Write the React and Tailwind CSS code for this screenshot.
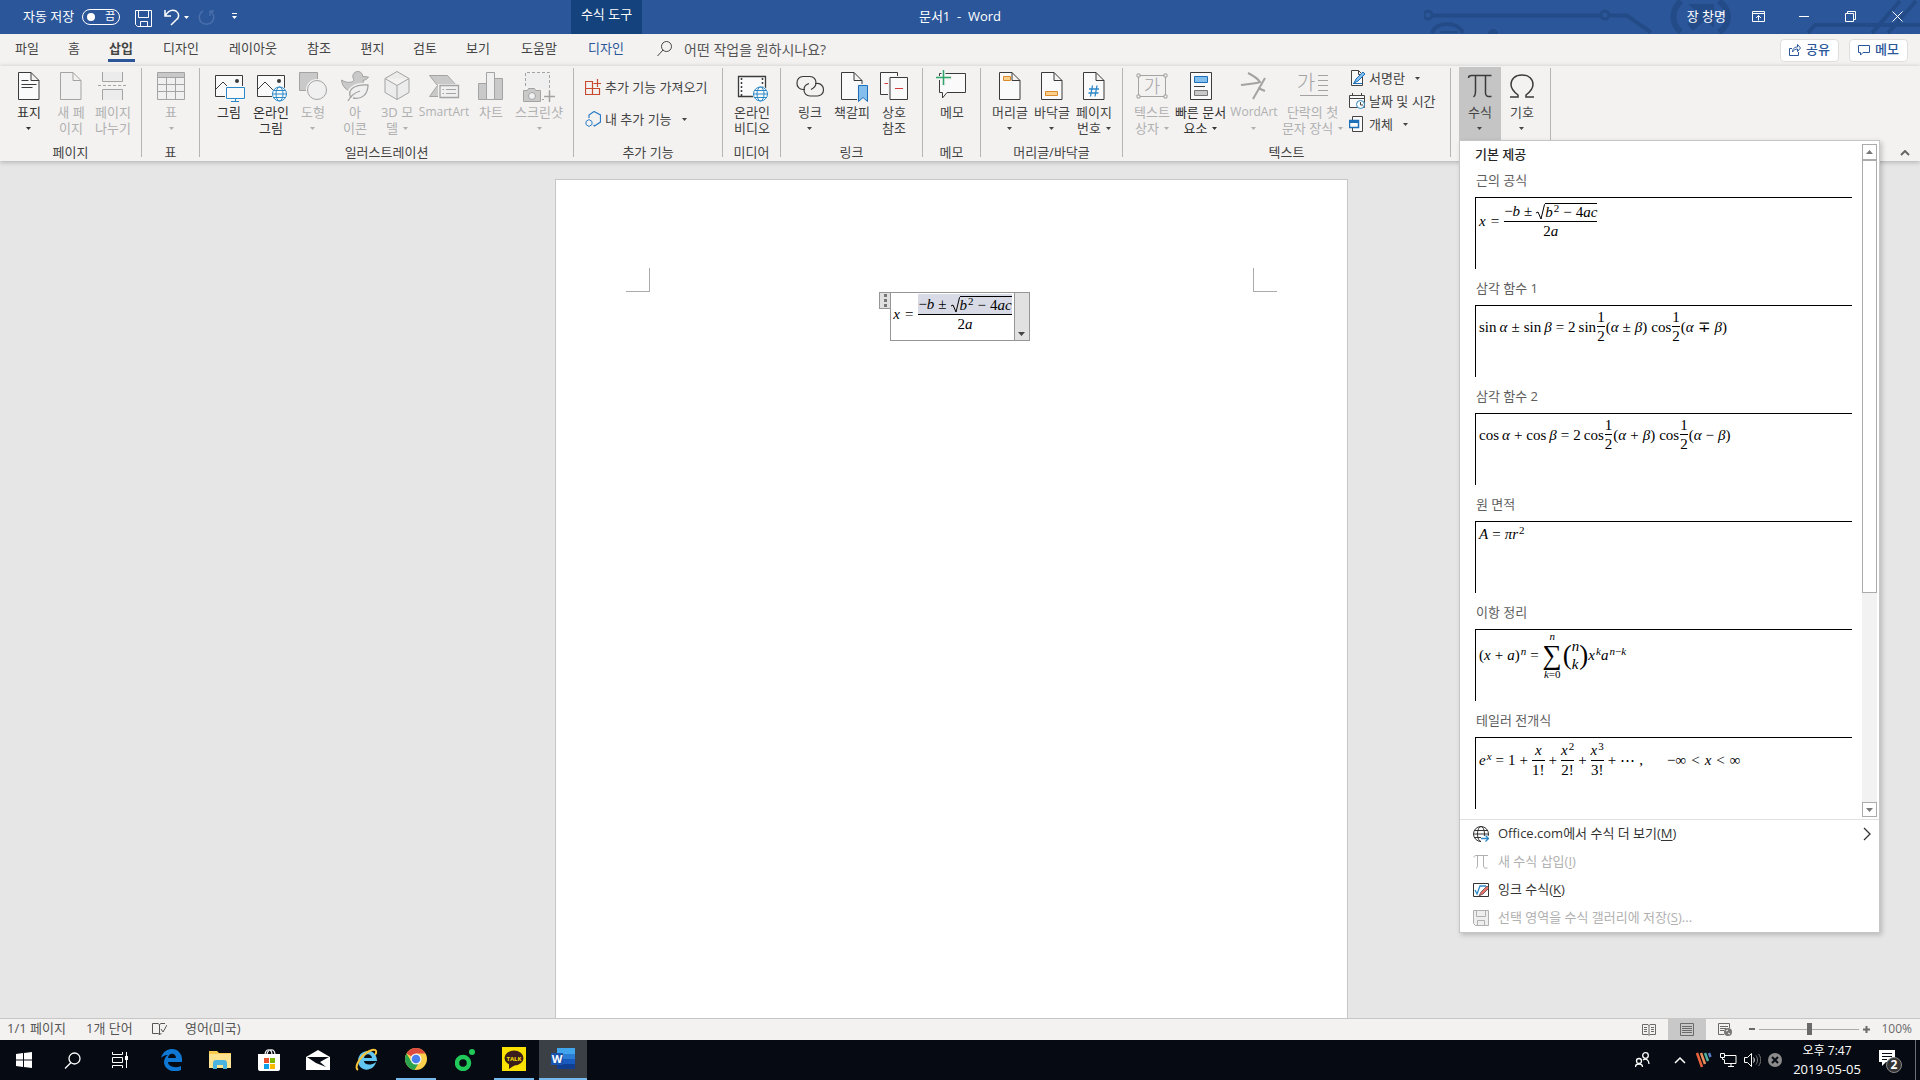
import React, { useState } from 'react';
import clsx from 'clsx';

const Svg = ({ w = 32, h, className, children, ...rest }) => (
    <svg
        width={w}
        height={h || w}
        viewBox={`0 0 ${w} ${h || w}`}
        fill="none"
        stroke="currentColor"
        aria-hidden="true"
        className={clsx('shrink-0', className)}
        {...rest}
    >
        {children}
    </svg>
);

const Caret = ({ className }) => (
    <Svg w={5} h={3} className={clsx('inline-block', className)} stroke="none">
        <path d="M0 0h5L2.500 3z" fill="currentColor" />
    </Svg>
);

const Arrow = ({ className }) => (
    <Svg w={7} h={4} className={className} stroke="none">
        <path d="M0 0h7L3.500 4z" fill="currentColor" />
    </Svg>
);

const Globe = ({ cx, cy, r, color = '#2b88c8', bg = '#fafafa' }) => (
    <g stroke={color} fill="none">
        <circle cx={cx} cy={cy} r={r + 1} fill={bg} stroke="none" />
        <circle cx={cx} cy={cy} r={r} />
        <ellipse cx={cx} cy={cy} rx={r / 2} ry={r} />
        <path d={`M${cx - r} ${cy}h${r * 2}M${cx - r + 1} ${cy - r / 2}h${r * 2 - 2}M${cx - r + 1} ${cy + r / 2}h${r * 2 - 2}`} />
    </g>
);

/* ---------- ribbon icons, 32x32 ---------- */

const Sheet = ({ fill = '#fafafa' }) => (
    <path d="M5.5 2.5h12.5l8 8v19H5.5zM18 2.5v8h8" fill={fill} />
);

const icons = {
    cover: <><Sheet /><path d="M8.500 10.500h7M8.500 14.500h15M8.500 17.500h11" /></>,
    newPage: <Sheet fill="#f0f0f0" />,
    pageBreak: <><path d="M5.500 2v9.500h20V2M5.500 30v-10.500h20V30" fill="#ececec" /><path d="M1 15.500h29" strokeDasharray="3 2" /></>,
    table: <><path d="M2.500 2.500h27v27h-27z" fill="#f0f0f0" /><path d="M3 3h26v4H3z" fill="#c8c8c8" stroke="none" /><path d="M2.500 7.500h27M2.500 14.500h27M2.500 21.500h27M11.500 7v22M20.500 7v22" /></>,
    picture: <>
        <path d="M2.500 5.500h27v21h-27z" fill="#fafafa" /><path d="M3 19l7-7 9 9" /><circle cx="24" cy="11" r="2" fill="currentColor" stroke="none" />
        <path d="M12 16h20v14H12z" fill="#fafafa" stroke="none" /><path d="M13.500 17.500h18v11h-18zM22.500 28.500v3M18 31.500h8" stroke="#2b88c8" fill="#fafafa" />
    </>,
    onlinePicture: <>
        <path d="M2.500 5.500h27v21h-27z" fill="#fafafa" /><path d="M3 19l7-7 9 9" /><circle cx="24" cy="11" r="2" fill="currentColor" stroke="none" />
        <Globe cx={24.5} cy={24} r={7} />
    </>,
    shapes: <><path d="M2.500 2.500h18v18h-18z" fill="#c9c9c9" /><circle cx="20" cy="20" r="11" fill="#f3f2f1" stroke="none" /><circle cx="20" cy="20" r="9.500" fill="#f0f0f0" /></>,
    iconSet: <>
        <path d="M14.500 9a5 5 0 1 1 9.300-2.500L29.500 7c-1 2-3 3-5.500 3.500 2 6-2 11-9 11S3 17 2.500 10c3 2 7 3 10 2 2-.500 2.500-2 2-3z" fill="#c9c9c9" />
        <path d="M12 28c-5-9 5-14 17-13 0 9-6 15-15 13" fill="#f0f0f0" stroke="#f3f2f1" strokeWidth="4" />
        <path d="M12 28c-5-9 5-14 17-13 0 9-6 15-15 13M9 31c2-4 6-8 12-10" fill="#f0f0f0" strokeWidth="1.300" />
    </>,
    cube: <path d="M16 1.500l12 7v14l-12 7-12-7v-14zM4 8.500l12 7 12-7M16 15.500v14" fill="#ececec" />,
    smartArt: <>
        <path d="M1.500 5.500h18l8 10-8 11h-18l8-11z" fill="#c9c9c9" stroke="none" /><path d="M12 26.500H1.500l8-11-8-10h18l8 9" />
        <path d="M10 14h21.500v15H10z" fill="#f3f2f1" stroke="none" /><path d="M12 15.500h18.500v12H12z" fill="#f0f0f0" strokeWidth="1.300" /><path d="M14.500 19.500h1.500M14.500 23.500h1.500M18 19.500h10M18 23.500h10" />
    </>,
    chart: <><path d="M3.500 13.500h8v16h-8z" fill="#c9c9c9" /><path d="M11.500 2.500h8v27h-8z" fill="#f0f0f0" /><path d="M19.500 8.500h8v21h-8z" fill="#c9c9c9" /></>,
    screenshot: <>
        <path d="M2.500 16V2.500h24V21M19 29.500h2" fill="#efefef" strokeDasharray="3 2" />
        <path d="M.500 20.500h4l1-2h6l1 2h5v11H.500z" fill="#c9c9c9" /><circle cx="9" cy="26" r="3.500" fill="#f0f0f0" /><path d="M21 26.500h11M26.500 21v11" strokeWidth="1.500" />
    </>,
    video: <>
        <path d="M2.500 6.500h27v20h-27z" fill="#fafafa" strokeWidth="1.300" /><path d="M5.500 8v18M26.500 8v18" strokeDasharray="2 2" strokeWidth="1.500" />
        <Globe cx={24.5} cy={24} r={7} />
    </>,
    link: <>
        <path d="M11 19.500H9a6 6 0 0 1-6-6.500 6 6 0 0 1 6-6.500h7a6 6 0 0 1 6 6.500c0 3-2 5-5 6.500" strokeWidth="1.200" />
        <path d="M21 13.500h2a6 6 0 0 1 6.500 6.500 6 6 0 0 1-6.500 6h-7a6 6 0 0 1-6-6.500c0-3 2-5 5-6" strokeWidth="1.200" />
    </>,
    bookmark: <><Sheet /><path d="M21 14h11v18H21z" fill="#f3f2f1" stroke="none" /><path d="M22.500 15.500h9v16l-4.500-4-4.500 4z" fill="#83beec" stroke="#1d6fb8" /></>,
    crossRef: <>
        <path d="M2.500 2.500h17v22h-17z" fill="#fafafa" /><path d="M6.500 13.500h5" stroke="#d83b3b" />
        <path d="M10 6h21v25H10z" fill="#f3f2f1" stroke="none" /><path d="M12 7.500h17.500v22H12z" fill="#fafafa" /><path d="M17 18.500h8" stroke="#d83b3b" />
    </>,
    comment: <><path d="M3.500 3.500h26v19H11l-4.500 5.500v-5.500h-3z" fill="#fafafa" /><path d="M0 8h16M7.500 0v16" stroke="#f3f2f1" strokeWidth="4" /><path d="M0 7.500h15M7.500 0v15" stroke="#2ea56a" strokeWidth="1.500" /></>,
    header: <><Sheet /><path d="M9.500 6.500h7v4h-7z" fill="#fbd08c" stroke="#dc8a2e" /></>,
    footer: <><Sheet /><path d="M9.500 21.500h12v4h-12z" fill="#fbd08c" stroke="#dc8a2e" /></>,
    pageNumber: <><Sheet /><path d="M14.500 15.500l-2 11M19 15.500l-2 11M11 19h10M10.500 23h10" stroke="#2b88c8" strokeWidth="1.300" /></>,
    textBox: <>
        <path d="M2.500 5.500h27v21h-27z" /><path d="M1 4h3v3H1zM28 4h3v3h-3zM1 25h3v3H1zM28 25h3v3h-3z" fill="#f3f2f1" />
        <text x="16" y="23" fontSize="18" textAnchor="middle" stroke="none" fill="currentColor" className="font-light">가</text>
    </>,
    quickParts: <>
        <path d="M5.500 2.500h21v27h-21z" fill="#fafafa" /><path d="M9.500 6.500h13v6h-13z" fill="#83beec" stroke="#1d6fb8" /><path d="M9 16.500h11" /><path d="M9.500 20.500h13v5h-13z" fill="#c9c9c9" stroke="#777" />
    </>,
    wordArt: <><path d="M10 3c6 3 10 6 12 9-6 2-12 2-19 3" strokeWidth="2" /><path d="M27 8L15 29M20 18l7 3" strokeWidth="2" /></>,
    dropCap: <><text x="9" y="20" fontSize="20" textAnchor="middle" stroke="none" fill="currentColor" className="font-light">가</text><path d="M21 5.500h10M21 10.500h10M21 15.500h10M21 20.500h10M3 25.500h28" /></>,
    equation: <path d="M4.500 8c0-2 1-2.500 3-2.500h20M11.500 6v15c0 3-.5 5-2 6M21.500 6v17c0 3 2 4 6 3.500" strokeWidth="1.500" />,
    symbol: <path d="M4 27h8v-2c-4-3-7-6-7-10.500C5 9 9 5 16 5s11 4 11 9.500c0 4.500-3 7.500-7 10.500v2h8" strokeWidth="1.500" />,
};

const BigButton = ({ icon, lines, caret, disabled, active, width = 'w-[42px]', small, dark }) => (
    <button
        disabled={disabled}
        className={clsx(
            'flex h-[73px] shrink-0 flex-col items-center gap-[2px] pt-[3px]',
            width,
            disabled ? 'text-[#b0b0b0]' : dark ? 'text-[#333]' : 'text-[#444]',
            active && 'bg-[#c5c5c5]'
        )}
    >
        <Svg className={disabled ? 'text-[#a3a3a3]' : 'text-[#3b3b3b]'}>{icons[icon]}</Svg>
        <span className={clsx('flex flex-col items-center leading-4 whitespace-nowrap', small ? 'text-[12px]' : 'text-[13px]')}>
            <span>{lines[0]}</span>
            <span className="flex h-4 items-center gap-[5px]">
                {lines[1]}
                {caret && <Caret />}
            </span>
        </span>
    </button>
);

const Group = ({ label, className, children }) => (
    <section className={clsx('relative flex shrink-0', className)} aria-label={label}>
        <div className="flex min-w-0 flex-1 flex-col">
            <div className="flex h-[73px] pl-2">{children}</div>
            <div className="mt-1 text-center text-[13px] leading-4 text-[#444]">{label}</div>
        </div>
        <div className="mt-px mb-1 w-px shrink-0 bg-[#b5b5b5]" />
    </section>
);

const RowButton = ({ icon, label, caret }) => (
    <button className="flex items-center gap-1 text-[13px] leading-4 whitespace-nowrap text-[#444]">
        {icon}
        {label}
        {caret && <Caret className="ml-[6px]" />}
    </button>
);

/* ---------- formulas ---------- */

const Op = ({ children }) => <span className="mx-1">{children}</span>;
const It = ({ children }) => <i>{children}</i>;
const Sup = ({ children }) => <span className="mb-2 ml-px text-[11px] leading-3">{children}</span>;

const Frac = ({ top, bottom, tall, selected }) => (
    <span className="flex flex-col text-center leading-[18px]">
        <span className={clsx('flex items-center justify-center border-b border-black', selected && 'bg-[#d8dbe6]', tall ? 'h-[21px]' : 'h-[19px]')}>{top}</span>
        <span>{bottom}</span>
    </span>
);

const Quadratic = ({ selected }) => (
    <>
        <It>x</It>
        <span className="mx-[5px]">=</span>
        <Frac
            tall
            selected={selected}
            top={
                <>
                    −<It>b</It><Op>±</Op>
                    <Svg w={9} h={16} className="mt-px"><path d="M0 9l2-1 3 7L8.500.500H9" /></Svg>
                    <span className="flex h-[16px] items-center border-t border-black leading-4">
                        <It>b</It><Sup>2</Sup><Op>−</Op>4<It>ac</It>
                    </span>
                </>
            }
            bottom={<>2<It>a</It></>}
        />
    </>
);

const Half = () => <Frac top="1" bottom="2" />;

const TrigRow = ({ fn, op1, op2, op3 }) => (
    <>
        {fn}<It>&thinsp;α</It><Op>{op1}</Op>{fn}<It>&thinsp;β</It><Op>=</Op>2<span className="ml-[3px]">{fn}</span>
        <span className="mx-px"><Half /></span>
        (<It>α</It><Op>{op2}</Op><It>β</It>)<span className="ml-1">cos</span>
        <span className="mx-px"><Half /></span>
        (<It>α</It><Op>{op3}</Op><It>β</It>)
    </>
);

const gallery = [
    { title: '근의 공식', pad: 'pt-[3px]', body: <Quadratic /> },
    { title: '삼각 함수 1', pad: 'pt-[2px]', body: <TrigRow fn="sin" op1="±" op2="±" op3="∓" /> },
    { title: '삼각 함수 2', pad: 'pt-[2px]', body: <TrigRow fn="cos" op1="+" op2="+" op3="−" /> },
    { title: '원 면적', pad: 'pt-[2px]', body: <><It>A</It><Op>=</Op><It>πr</It><Sup>2</Sup></> },
    {
        title: '이항 정리',
        pad: 'pt-px',
        body: (
            <>
                (<It>x</It><Op>+</Op><It>a</It>)<Sup><It>n</It></Sup><Op>=</Op>
                <span className="flex flex-col items-center text-[11px] leading-[10px]">
                    <It>n</It>
                    <span className="text-[27px] leading-7">∑</span>
                    <span><It>k</It>=0</span>
                </span>
                <span className="ml-px text-[27px] leading-7">(</span>
                <span className="flex flex-col leading-[18px]"><It>n</It><It>k</It></span>
                <span className="text-[27px] leading-7">)</span>
                <It>x</It><Sup><It>k</It></Sup><It>a</It><Sup><It>n</It>−<It>k</It></Sup>
            </>
        ),
    },
    {
        title: '테일러 전개식',
        pad: 'pt-[2px]',
        body: (
            <>
                <It>e</It><Sup><It>x</It></Sup><Op>=</Op>1<Op>+</Op>
                <Frac tall top={<It>x</It>} bottom="1!" /><Op>+</Op>
                <Frac tall top={<><It>x</It><Sup>2</Sup></>} bottom="2!" /><Op>+</Op>
                <Frac tall top={<><It>x</It><Sup>3</Sup></>} bottom="3!" /><Op>+</Op>
                ⋯<span className="ml-1">,</span>
                <span className="ml-6">−∞</span><span className="mx-[5px]">&lt;</span><It>x</It><span className="mx-[5px]">&lt;</span>∞
            </>
        ),
    },
];

const Pi = () => <Svg w={16}><path d="M1 3.500C1 2 2 1.500 3 1.500h12M4.500 2v9c0 2-.5 3-1.500 3.500M10.500 2v10c0 2 2 2.500 4 2" /></Svg>;

const menu = [
    {
        label: 'Office.com에서 수식 더 보기', k: 'M', more: true,
        icon: <Svg w={16}><circle cx="8" cy="8" r="7.500" /><ellipse cx="8" cy="8" rx="3.500" ry="7.500" /><path d="M.500 8h15M1.500 4.500h13M1.500 11.500h8" /><path d="M8 10h8v6H8z" fill="#fff" stroke="none" /><path d="M8 12.500h7M12.500 9.500l3 3-3 3" stroke="#2b88c8" strokeWidth="1.300" /></Svg>,
    },
    { label: '새 수식 삽입', k: 'I', disabled: true, icon: <Pi /> },
    {
        label: '잉크 수식', k: 'K',
        icon: <Svg w={16}><path d="M.500 1.500h15v13H.500z" /><path d="M2 8l2 4 3-8h6" stroke="#2b88c8" strokeWidth="1.300" /><path d="M6 14l2-4 6-6 2 2-6 6z" fill="#e8716b" stroke="#444" strokeWidth=".7" /></Svg>,
    },
    {
        label: '선택 영역을 수식 갤러리에 저장', k: 'S', tail: '...', disabled: true,
        icon: <Svg w={16}><path d="M.500.500h15v15h-13l-2-2z" fill="#eee" /><path d="M3.500.500v6h9v-6M4.500 15.500v-5h7v5" /></Svg>,
    },
];

const EquationMenu = () => (
    <div className="absolute top-[73px] left-2 z-10 w-[421px] border border-[#c6c6c6] bg-white shadow-[2px_2px_5px_rgba(0,0,0,0.2)]">
        <div className="flex border-b border-[#e1e1e1] pt-[3px] pr-[2px] pb-[2px] pl-[15px]">
            <div className="flex-1 pr-[10px] pb-2">
                <h2 className="h-[17px] pt-[3px] text-[13px] leading-[14px] font-medium text-[#262626]">기본 제공</h2>
                {gallery.map(item => (
                    <div key={item.title}>
                        <h3 className="h-[36px] pt-[10px] pl-px text-[13px] leading-[18px] text-[#5e5e5e]">{item.title}</h3>
                        <button className={clsx('block h-[72px] w-full border-t border-l border-black pl-[3px] text-left text-black', item.pad)}>
                            <span className="flex h-full items-start">
                                <span className="flex items-center font-['Liberation_Serif',serif] text-[15px] leading-5 whitespace-pre">{item.body}</span>
                            </span>
                        </button>
                    </div>
                ))}
            </div>
            <div className="flex w-[15px] flex-col bg-[#f2f2f2]">
                <button aria-label="위로" className="flex h-4 items-center justify-center border border-[#ababab] bg-white text-[#777]"><Arrow className="rotate-180" /></button>
                <div className="h-[433px] border border-[#ababab] bg-white" />
                <div className="flex-1" />
                <button aria-label="아래로" className="flex h-[15px] items-center justify-center border border-[#ababab] bg-white text-[#777]"><Arrow /></button>
            </div>
        </div>
        <ul>
            {menu.map(m => (
                <li key={m.k}>
                    <button
                        disabled={m.disabled}
                        className={clsx('flex h-7 w-full items-center gap-[9px] pr-2 pl-[13px] text-[13px]', m.disabled ? 'text-[#b0b0b0]' : 'text-[#333]')}
                    >
                        {m.icon}
                        <span>{m.label}(<u className="underline-offset-2">{m.k}</u>){m.tail}</span>
                        {m.more && <Svg w={8} h={14} className="ml-auto"><path d="M1 1l6 6-6 6" strokeWidth="1.300" /></Svg>}
                    </button>
                </li>
            ))}
        </ul>
    </div>
);

/* ---------- title bar ---------- */

const TitleBar = () => (
    <header className="relative flex h-[34px] items-center bg-[#2b579a] pb-px text-[13px] text-white">
        <Svg w={496} h={34} className="absolute right-0 bottom-0" stroke="#234b87" strokeWidth="4">
            <circle cx="4" cy="15" r="4" strokeWidth="3" />
            <path d="M8 15.500h142" /><circle cx="181" cy="15" r="4" strokeWidth="3" /><path d="M150 15.500h27M186 15.500h17l24 17" />
            <path d="M8 33c4-12 26-12 31 0" /><path d="M16 32h18" strokeWidth="2" /><circle cx="69" cy="34" r="5" fill="#234b87" stroke="none" />
            <path d="M257 1c-10 9-10 23 0 31M295 1c12 9 12 23 0 31" strokeWidth="6" /><path d="M264 4h26v24l-9-8-12 11-6-7 11-11z" fill="#234b87" stroke="none" />
            <path d="M384 33l7-8h105M448 33l28-32M464 33l28-32" />
        </Svg>
        <div className="flex flex-1 items-center">
            <span className="ml-[23px] w-[59px] whitespace-nowrap">자동 저장</span>
            <button className="flex h-4 w-[38px] items-center justify-between rounded-full border border-white px-1 text-[11px]">
                <span className="size-2 rounded-full bg-white" />
                <span>끔</span>
            </button>
            <button aria-label="저장" className="ml-[15px] pt-1"><Svg w={17}><path d="M.500.500h16v16h-14l-2-2zM3.500.500v7h10v-7M5.500 16.500v-5h7v5" /></Svg></button>
            <button aria-label="실행 취소" className="ml-3 flex items-center gap-1 pt-px"><Svg w={16} h={17}><path d="M1 1v6h6M1 7c3-5 7-7 11-5 4 3 3 7 0 9l-5 5" strokeWidth="1.500" /></Svg><Caret /></button>
            <button aria-label="다시 실행" className="ml-[9px] pt-px text-[#4a6fab]"><Svg w={17}><path d="M5 2C1 4 0 9 3 13c3 3 8 3 11 0 3-4 2-9-2-11h4M12 2v5" strokeWidth="1.500" /></Svg></button>
            <button aria-label="빠른 실행 도구 모음" className="ml-[17px]"><Svg w={5} h={7}><path d="M0 .500h5" /><path d="M0 3h5L2.500 6z" fill="currentColor" stroke="none" /></Svg></button>
        </div>
        <div className="absolute left-[571px] flex h-full w-[71px] items-center justify-center bg-[#13427c] pb-[3px]">수식 도구</div>
        <div className="whitespace-pre">문서1  -  Word</div>
        <div className="relative flex flex-1 items-center justify-end">
            <span className="mr-[26px]">장 창명</span>
            <button aria-label="리본 표시 옵션" className="mr-[34px]"><Svg w={13} h={11}><path d="M.500.500h12v10H.500zM.500 2.500h12M6.500 9.500v-5M4 7l2.500-2.500L9 7" /></Svg></button>
            <button aria-label="최소화" className="mr-9"><Svg w={10} h={2}><path d="M0 .500h10" /></Svg></button>
            <button aria-label="이전 크기로 복원" className="mr-9"><Svg w={11} h={11}><path d="M.500 2.500h8v8h-8zM2.500 2V.500h8v8H9" /></Svg></button>
            <button aria-label="닫기" className="mr-[17px]"><Svg w={11} h={11}><path d="M.500.500l10 10M10.500.500l-10 10" /></Svg></button>
        </div>
    </header>
);

const tabs = [
    ['파일', 'w-[54px]'], ['홈', 'w-[40px]'], ['삽입', 'w-[54px]'], ['디자인', 'w-[66px]'], ['레이아웃', 'w-[78px]'], ['참조', 'w-[54px]'],
    ['편지', 'w-[53px]'], ['검토', 'w-[52px]'], ['보기', 'w-[54px]'], ['도움말', 'w-[68px]'], ['디자인', 'w-[66px]'],
];

const Tabs = () => (
    <nav className="flex h-[32px] items-center text-[13px] text-[#444]">
        {tabs.map(([name, width], i) => (
            <button key={i} className={clsx('flex h-full flex-col items-center gap-px pt-1 leading-5', width, i === 10 && 'text-[#2b579a]', i === 2 && 'font-bold')}>
                {name}
                {i === 2 && <span className="h-[3px] w-[27px] bg-[#2b579a]" />}
            </button>
        ))}
        <label className="ml-[18px] flex items-center gap-3 pb-[2px]">
            <Svg w={15} h={16}><circle cx="9.500" cy="5.500" r="5" /><path d="M6 9l-5.500 6" /></Svg>
            <input type="text" placeholder="어떤 작업을 원하시나요?" aria-label="어떤 작업을 원하시나요?" className="w-[200px] bg-transparent text-[14px] outline-none placeholder:text-[#555]" />
        </label>
        <div className="mr-3 ml-auto flex gap-[10px] font-medium text-[#2b579a]">
            <button className="flex h-[23px] w-[59px] items-center justify-center gap-[5px] rounded-sm border border-[#e1dfdd] bg-white">
                <Svg w={12}><path d="M3 4.500H.500v7h9V8" /><path d="M3.500 8c0-4 3-5 5-5V.500l3 3.500-3 3.500V5c-2 0-4 1-5 3z" /></Svg>공유
            </button>
            <button className="flex h-[23px] w-[59px] items-center justify-center gap-[5px] rounded-sm border border-[#e1dfdd] bg-white">
                <Svg w={12} h={11}><path d="M.500.500h11v7H5L2.500 10V7.500h-2z" /></Svg>메모
            </button>
        </div>
    </nav>
);

const Ribbon = () => (
    <div className="relative z-10 flex h-[95px] pt-px shadow-[0_1px_5px_rgba(0,0,0,0.25)]">
        <Group label="페이지" className="w-[142px]">
            <BigButton icon="cover" lines={['표지']} caret dark />
            <BigButton icon="newPage" lines={['새 페', '이지']} disabled />
            <BigButton icon="pageBreak" lines={['페이지', '나누기']} disabled />
        </Group>
        <Group label="표" className="w-[58px]">
            <BigButton icon="table" lines={['표']} caret disabled />
        </Group>
        <Group label="일러스트레이션" className="w-[374px]">
            <BigButton icon="picture" lines={['그림']} dark />
            <BigButton icon="onlinePicture" lines={['온라인', '그림']} dark />
            <BigButton icon="shapes" lines={['도형']} caret disabled />
            <BigButton icon="iconSet" lines={['아', '이콘']} disabled />
            <BigButton icon="cube" lines={['3D 모', '델']} caret disabled />
            <BigButton icon="smartArt" lines={['SmartArt']} width="w-[52px]" small disabled />
            <BigButton icon="chart" lines={['차트']} disabled />
            <BigButton icon="screenshot" lines={['스크린샷']} width="w-[54px]" caret disabled />
        </Group>
        <Group label="추가 기능" className="w-[149px]">
            <div className="flex flex-col gap-4 pt-3 pl-[3px]">
                <RowButton
                    label="추가 기능 가져오기"
                    icon={<Svg w={16} stroke="#c8492b"><path d="M8 2.500H.500v13h14V9.500H.500M7.500 2.500v13M12.500 0v8M8.500 4.500h7.500" strokeWidth="1.200" /></Svg>}
                />
                <RowButton
                    label="내 추가 기능"
                    caret
                    icon={<Svg w={16} stroke="#2b7cc4"><path d="M4 7V4l5-3.500L15.500 4v7l-6 4-1-1" strokeWidth="1.200" /><path d="M1 10.500l3-2 3 2v3l-3 2-3-2z" /></Svg>}
                />
            </div>
        </Group>
        <Group label="미디어" className="w-[58px]">
            <BigButton icon="video" lines={['온라인', '비디오']} />
        </Group>
        <Group label="링크" className="w-[142px]">
            <BigButton icon="link" lines={['링크']} caret />
            <BigButton icon="bookmark" lines={['책갈피']} />
            <BigButton icon="crossRef" lines={['상호', '참조']} />
        </Group>
        <Group label="메모" className="w-[58px]">
            <BigButton icon="comment" lines={['메모']} />
        </Group>
        <Group label="머리글/바닥글" className="w-[142px]">
            <BigButton icon="header" lines={['머리글']} caret />
            <BigButton icon="footer" lines={['바닥글']} caret />
            <BigButton icon="pageNumber" lines={['페이지', '번호']} caret />
        </Group>
        <Group label="텍스트" className="w-[328px]">
            <BigButton icon="textBox" lines={['텍스트', '상자']} caret disabled />
            <BigButton icon="quickParts" lines={['빠른 문서', '요소']} width="w-[55px]" caret dark />
            <BigButton icon="wordArt" lines={['WordArt']} width="w-[52px]" small caret disabled />
            <BigButton icon="dropCap" lines={['단락의 첫', '문자 장식']} width="w-[65px]" caret disabled />
            <div className="flex flex-col gap-[7px] pt-[3px] pl-1">
                <RowButton
                    label="서명란"
                    caret
                    icon={<Svg w={16}><path d="M2.500.500h7l4 4v11h-11zM9.500.500v4h4" fill="#fafafa" /><path d="M5 13l2-4 7-7 2 2-7 7z" fill="#83beec" stroke="#1d6fb8" /><path d="M4 13.500h9" stroke="#1d6fb8" /></Svg>}
                />
                <RowButton
                    label="날짜 및 시간"
                    icon={<Svg w={16}><path d="M.500 2.500h15v12H.500zM.500 5.500h15M3.500 0v3M12.500 0v3" fill="#fafafa" /><circle cx="11.500" cy="11.500" r="4" fill="#fafafa" stroke="#2b88c8" /><path d="M11.500 9v3h2.500" /></Svg>}
                />
                <RowButton
                    label="개체"
                    caret
                    icon={<Svg w={16}><path d="M3.500.500h10v15h-10z" fill="#fafafa" /><path d="M.500 4.500h9v7h-9z" fill="#fafafa" stroke="#1d6fb8" strokeWidth="1.500" /><path d="M1 6h8" stroke="#1d6fb8" strokeWidth="2" /></Svg>}
                />
            </div>
        </Group>
        <Group className="w-[100px]">
            <BigButton icon="equation" lines={['수식']} caret active />
            <BigButton icon="symbol" lines={['기호']} caret />
            <EquationMenu />
        </Group>
        <button aria-label="리본 축소" className="mt-auto mr-[10px] mb-[5px] ml-auto text-[#666]"><Svg w={10} h={6}><path d="M1 5l4-4 4 4" strokeWidth="2" /></Svg></button>
    </div>
);

const Document = () => (
    <main className="flex min-h-0 flex-1 justify-center bg-[#e6e6e6] pt-[18px] pr-[17px]">
        <article className="w-[793px] border border-b-0 border-[#c6c6c6] bg-white px-[70px] pt-[88px]">
            <div className="flex justify-between">
                <span className="size-6 border-r border-b border-[#ababab]" />
                <span className="size-6 border-b border-l border-[#ababab]" />
            </div>
            <div className="flex items-start justify-center pl-[6px] text-black">
                <button aria-label="이동" className="flex h-[17px] w-[11px] flex-col items-center justify-center gap-[2px] border border-r-0 border-[#969696] bg-[#e1e1e1]">
                    <span className="size-[3px] bg-[#777]" />
                    <span className="size-[3px] bg-[#777]" />
                    <span className="size-[3px] bg-[#777]" />
                </button>
                <div className="flex h-[49px] items-start border border-[#969696] pt-px pr-[2px] pl-[2px] font-['Liberation_Serif',serif] text-[15px] leading-5 whitespace-pre">
                    <div className="flex items-center"><Quadratic selected /></div>
                </div>
                <button aria-label="수식 옵션" className="flex h-[49px] w-[15px] items-end justify-center border border-l-0 border-[#969696] bg-[#e1e1e1] pb-1 text-[#444]"><Arrow /></button>
            </div>
        </article>
    </main>
);

const StatusBar = () => {
    const [zoom, setZoom] = useState(50);
    return (
        <footer className="flex h-[22px] items-center border-t border-[#c6c6c6] bg-[#f3f2f1] pb-px text-[13px] text-[#555]">
            <span className="ml-[7px] w-[79px]">1/1 페이지</span>
            <span className="w-[66px]">1개 단어</span>
            <Svg w={15} h={14}><path d="M7.500 12.500L6 11.500H.500v-10H6l1.500 1 1.500-1h4M7.500 2.500v10l2-1M9 7l2 3 4-7" /></Svg>
            <span className="ml-[18px]">영어(미국)</span>
            <div className="ml-auto flex h-[21px] items-center text-[#6a6a6a]">
                <button aria-label="읽기 모드" className="mr-3"><Svg w={14} h={13}><path d="M.500 1.500H6l1 1 1-1h5.500v10H8l-1 1-1-1H.500zM7 2v10M2 4.500h3M2 6.500h3M2 8.500h3M9 4.500h3M9 6.500h3M9 8.500h3" /></Svg></button>
                <button aria-label="인쇄 모양" className="mr-3 flex h-full w-[38px] items-center justify-center bg-[#c8c8c8]"><Svg w={14} h={13}><path d="M.500.500h13v12H.500zM2 3.500h10M2 5.500h10M2 7.500h10M2 9.500h10" /></Svg></button>
                <button aria-label="웹 레이아웃" className="mr-4"><Svg w={15} h={13}><path d="M6 11.500H.500V.500h11V5M2 3.500h8M2 5.500h6M2 7.500h4" /><circle cx="10" cy="9" r="4" fill="#777" stroke="none" /><path d="M8 8l2-1M10 10l2 1" stroke="#fff" /></Svg></button>
                <button aria-label="축소"><Svg w={6} h={2}><path d="M0 1h6" strokeWidth="2" /></Svg></button>
                <input
                    type="range"
                    aria-label="확대/축소"
                    value={zoom}
                    onChange={e => setZoom(e.target.value)}
                    className="mx-1 h-3 w-[100px] appearance-none bg-[linear-gradient(#ababab,#ababab)] bg-[length:100%_1px] bg-center bg-no-repeat [&::-webkit-slider-thumb]:h-3 [&::-webkit-slider-thumb]:w-[5px] [&::-webkit-slider-thumb]:appearance-none [&::-webkit-slider-thumb]:bg-[#6a6a6a]"
                />
                <button aria-label="확대"><Svg w={7} h={7}><path d="M0 3.500h7M3.500 0v7" strokeWidth="2" /></Svg></button>
                <span className="mr-2 ml-[11px] text-[12px]">100%</span>
            </div>
        </footer>
    );
};

const apps = [
    { name: 'Edge', icon: <Svg w={22} stroke="none"><path d="M1 9C3 2 8 0 12 0c6 0 10 5 10 10v3H8c0 4 7 7 13 4v4c-8 4-17-1-17-8 0-3 2-6 4-7-4 0-6 2-7 3zM8 9h8c0-5-7-6-8 0z" fill="#0f78d4" /></Svg> },
    { name: '파일 탐색기', icon: <Svg w={22} h={20} stroke="none"><path d="M0 1h8l2 2h12v15H0z" fill="#f7c94d" /><path d="M0 4h22v14H0z" fill="#fde28f" /><path d="M4 19v-6q0-3 3-3h8q3 0 3 3v6h-4v-4H8v4z" fill="#4ab3e0" /></Svg> },
    { name: 'Store', icon: <Svg w={22} stroke="none"><path d="M7 6c0-7 7-7 7 0M9 6c0-7 8-7 8 0" stroke="#fff" strokeWidth="1.200" /><path d="M0 5h22v15q0 2-3 2H3q-3 0-3-2z" fill="#fff" /><path d="M6 9h5v5H6z" fill="#e8502e" /><path d="M12 9h5v5h-5z" fill="#7db700" /><path d="M6 15h5v5H6z" fill="#0ba0e8" /><path d="M12 15h5v5h-5z" fill="#fcb900" /></Svg> },
    { name: '메일', icon: <Svg w={24} h={20} stroke="none"><path d="M0 7L12 0l12 7v13H0z" fill="#fff" /><path d="M1 7h22l-9 5 6 5-10-4z" fill="#060a12" /></Svg> },
    { name: 'Internet Explorer', icon: <Svg w={24} stroke="none"><path d="M3 12C4 5 9 3 13 3c6 0 9 5 9 10H9c0 4 7 5 12 1-2 10-18 11-18-2zm6-2h8c-1-5-7-5-8 0z" fill="#62c6f2" /><path d="M3 22c-5-3 4-17 14-20 5-1 5 2 3 5" stroke="#f5c43a" strokeWidth="2" fill="none" /></Svg> },
    { name: 'Chrome', open: true, icon: <Svg w={22} stroke="none"><circle cx="11" cy="11" r="11" fill="#fcd04b" /><path d="M11 11L1.500 5.500a11 11 0 0 1 19 0H11z" fill="#dd4b3e" /><path d="M1.500 5.500a11 11 0 0 0 8 16.400L15 13l-9 0z" fill="#2ba24c" /><circle cx="11" cy="11" r="5.500" fill="#f4f4f4" /><circle cx="11" cy="11" r="4.300" fill="#4a80ee" /></Svg> },
    { name: '네이트온', icon: <Svg w={20} h={22}><circle cx="8" cy="14" r="6" stroke="#20c95a" strokeWidth="4.500" /><circle cx="17" cy="3" r="3" fill="#20c95a" stroke="none" /></Svg> },
    { name: '카카오톡', open: true, icon: <Svg w={24} stroke="none"><path d="M0 0h24v24H0z" fill="#fae100" /><ellipse cx="12" cy="11" rx="9.500" ry="7.500" fill="#3a1d1d" /><path d="M7 16v6l6-4z" fill="#3a1d1d" /><text x="12" y="13.500" textAnchor="middle" fontSize="6" fill="#fae100" className="font-bold">TALK</text></Svg> },
    { name: 'Word', active: true, icon: <Svg w={24} h={22} stroke="none"><path d="M6 0h18v6H6z" fill="#41a5ee" /><path d="M6 6h18v5H6z" fill="#2b7cd3" /><path d="M6 11h18v5H6z" fill="#185abd" /><path d="M6 16h18v5H6z" fill="#103f91" /><path d="M0 5h12v12H0z" fill="#1853ae" /><text x="6" y="15" textAnchor="middle" fontSize="11" fill="#fff" className="font-bold">W</text></Svg> },
];

const Taskbar = () => (
    <div className="flex h-10 items-stretch bg-[#060a12] text-white">
        <button aria-label="시작" className="flex w-12 items-center justify-center"><Svg w={16} stroke="none"><path d="M0 2l7-1v6.500H0zM8 1l8-1v7.500H8zM0 8.500h7V15l-7-1zM8 8.500h8V16l-8-1z" fill="#fff" /></Svg></button>
        <button aria-label="검색" className="flex w-12 items-center justify-center"><Svg w={17}><circle cx="10.500" cy="6.500" r="5.500" strokeWidth="1.300" /><path d="M7 10.500L1 16.500" strokeWidth="1.300" /></Svg></button>
        <button aria-label="작업 보기" className="flex w-12 items-center justify-center"><Svg w={17} h={16}><path d="M.500 0v2.500h10V0M.500 16v-2.500h10V16M.500 5.500h10v5H.500zM14.500 0v16" /><path d="M13 4h3v4h-3z" fill="#fff" stroke="none" /></Svg></button>
        <div className="ml-[3px] flex gap-px">
            {apps.map(app => (
                <button key={app.name} aria-label={app.name} className={clsx('flex w-12 flex-col items-center', app.active && 'bg-[#3b3f46]')}>
                    <span className="flex flex-1 items-center">{app.icon}</span>
                    {(app.open || app.active) && <span className={clsx('h-[2px] bg-[#76b9ed]', app.active ? 'w-12' : 'w-10')} />}
                </button>
            ))}
        </div>
        <div className="ml-auto flex items-center">
            <Svg w={15} h={16} className="mr-6"><circle cx="10.500" cy="3.500" r="2.800" strokeWidth="1.300" /><circle cx="4" cy="9" r="2.500" strokeWidth="1.300" /><path d="M.500 15c0-4 7-4 7 0M8 8c3-2 6 0 6 4" strokeWidth="1.300" /></Svg>
            <Svg w={12} h={8} className="mr-[10px]"><path d="M1 7l5-5 5 5" strokeWidth="1.500" /></Svg>
            <Svg w={16} className="mr-2" strokeWidth="2.500"><path d="M1 1l5 14" stroke="#e8633a" /><path d="M5 1l4 11" stroke="#ec8d5c" /><path d="M9 1l3 8" stroke="#4fae9c" /><path d="M13 1l1.500 4" stroke="#5b7fc4" /></Svg>
            <Svg w={17} h={14} className="mr-[7px]"><path d="M5 2.500h11v8H4.500V7M8 13.500h6M11 11v2M.500.500h4v4h-4zM2.500 4.500v2h2" /></Svg>
            <Svg w={17} h={14} className="mr-[7px]"><path d="M.500 4.500h3l4-4v13l-4-4h-3z" /><path d="M9.500 4.500c1 1.500 1 3.500 0 5" /><path d="M12 2.500c2 3 2 6 0 9M14.500 1c3 4 3 8 0 12" stroke="#777" /></Svg>
            <Svg w={14} className="mr-[11px]" stroke="none"><circle cx="7" cy="7" r="7" fill="#8b8b8b" /><path d="M4 4l6 6M10 4l-6 6" stroke="#060a12" strokeWidth="2" /></Svg>
            <div className="mr-[18px] text-center text-[12px] leading-[18px]">
                <div>오후 7:47</div>
                <div className="text-[13px]">2019-05-05</div>
            </div>
            <button aria-label="알림" className="relative mr-3 h-6 w-6">
                <Svg w={16} className="absolute top-[2px] left-0" stroke="none"><path d="M0 0h16v12H7l-4 4v-4H0z" fill="#fff" /><path d="M3 3.500h10M3 6.500h10M3 9.500h5" stroke="#060a12" /></Svg>
                <span className="absolute top-[9px] left-[7px] flex size-4 items-center justify-center rounded-full border border-[#888] bg-[#333] text-[12px] font-bold">2</span>
            </button>
            <span className="mr-1 h-full w-px bg-[#6b6e73]" />
        </div>
    </div>
);

const App = () => (
    <div className="flex h-screen flex-col overflow-hidden bg-[#f3f2f1] font-['Open_Sans','Noto_Sans_CJK_KR',sans-serif]">
        <TitleBar />
        <Tabs />
        <Ribbon />
        <Document />
        <StatusBar />
        <Taskbar />
    </div>
);

export default App;
